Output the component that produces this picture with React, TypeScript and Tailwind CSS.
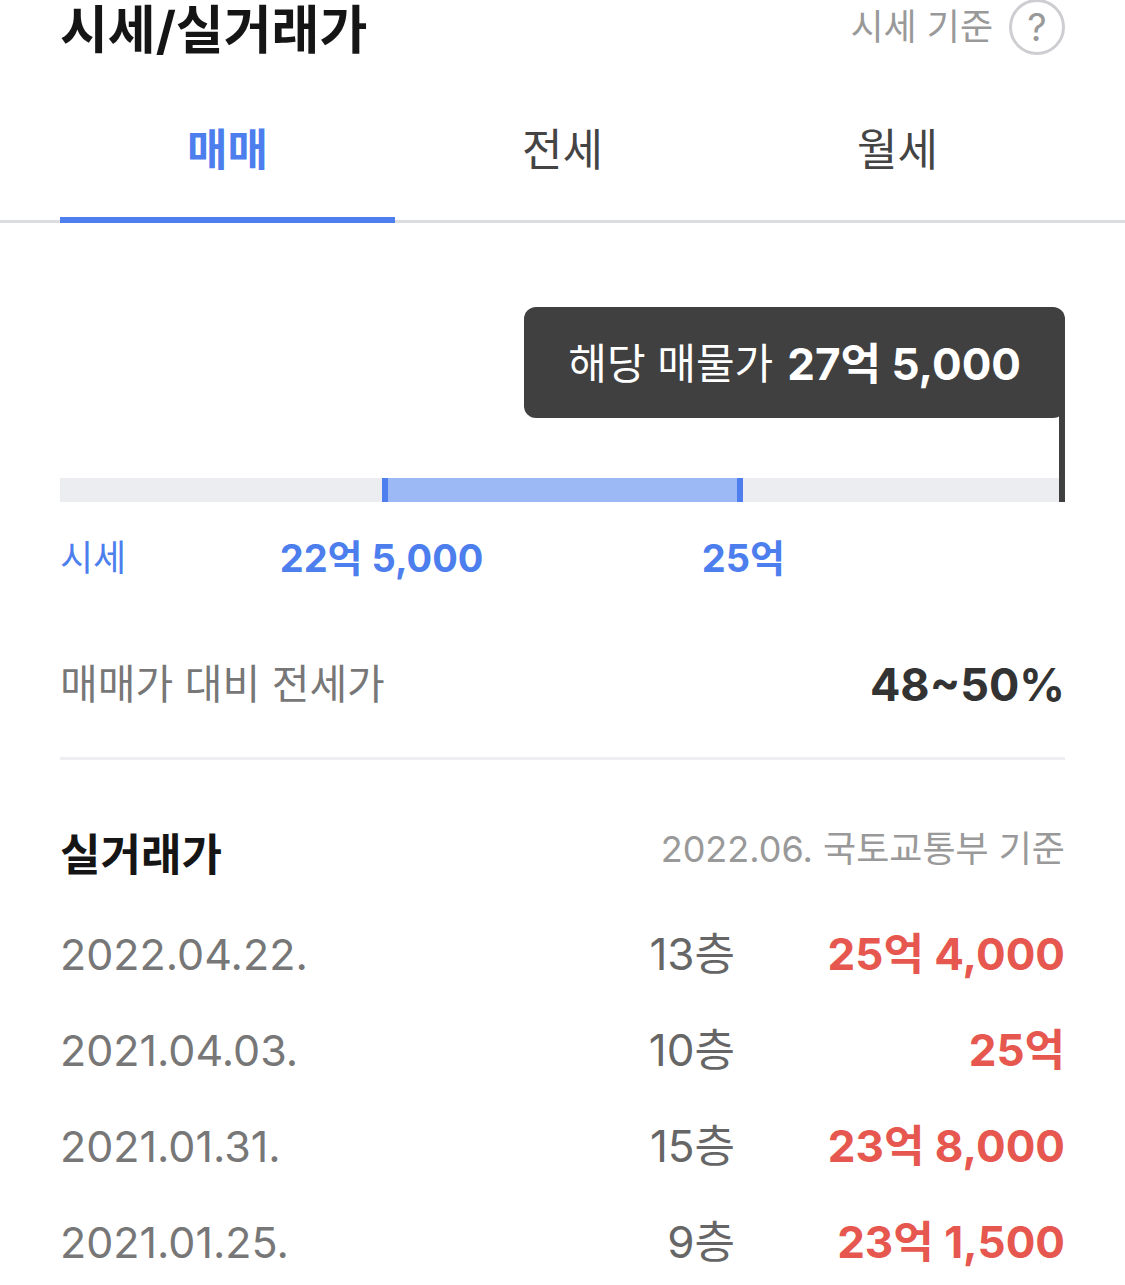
import React, { useState } from 'react';

const tabs = ['매매', '전세', '월세'];

const deals = [
  { date: '2022.04.22.', floor: '13층', price: '25억 4,000' },
  { date: '2021.04.03.', floor: '10층', price: '25억' },
  { date: '2021.01.31.', floor: '15층', price: '23억 8,000' },
  { date: '2021.01.25.', floor: '9층', price: '23억 1,500' },
];

const App = () => {
  const [activeTab, setActiveTab] = useState('매매');

  return (
    <main className="w-full overflow-hidden bg-white font-[Inter,'Noto_Sans_CJK_KR',sans-serif]">
      {/* Header */}
      <header className="flex h-[54px] items-center justify-between px-[60px]">
        <h1 className="pt-2 text-[52px] leading-14 font-bold text-[#151515]">시세/실거래가</h1>
        <div className="flex items-center gap-4 text-[36px] leading-14 text-[#999]">
          <span>시세 기준</span>
          <button
            aria-label="시세 기준 안내"
            className="flex size-14 items-center justify-center rounded-full border-3 border-[#cdcdd2] text-[38px]"
          >
            ?
          </button>
        </div>
      </header>

      {/* Tabs */}
      <nav className="mt-[38px] flex border-b-3 border-[#dcdde0] px-[60px]">
        {tabs.map((tab) => (
          <button
            key={tab}
            onClick={() => setActiveTab(tab)}
            className={`-mb-[3px] h-[131px] flex-1 border-b-6 pb-2.5 text-[44px] ${
              activeTab === tab
                ? 'border-[#4f7fee] font-bold text-[#4d7eee]'
                : 'border-transparent text-[#444]'
            }`}
          >
            {tab}
          </button>
        ))}
      </nav>

      {/* Price range */}
      <section className="px-[60px] pt-21">
        <div className="relative flex justify-end pb-15">
          <p className="flex h-[111px] items-center gap-3.5 rounded-xl bg-[#404040] px-11 pt-0.5 text-white">
            <span className="text-[42px]">해당 매물가</span>
            <strong className="text-[44px]">27억 5,000</strong>
          </p>
          <span className="absolute top-12 right-0 -bottom-6 z-10 w-1.5 bg-[#404040]" />
        </div>
        <div className="flex h-6 bg-[#ecedf1]">
          <div className="ml-[32%] w-[36%] border-x-6 border-[#4f7fee] bg-[#9cb8f5]" />
        </div>
        <div className="relative mt-6 h-16 text-[36px] leading-16 text-[#4d7eee]">
          <span>시세</span>
          <strong className="absolute left-[32%] -translate-x-1/2 text-[38px] whitespace-nowrap">22억 5,000</strong>
          <strong className="absolute left-[68%] -translate-x-1/2 text-[38px] whitespace-nowrap">25억</strong>
        </div>
      </section>

      {/* Lease ratio */}
      <section className="mx-[60px] flex h-[170px] items-center justify-between border-b-3 border-[#ededf2] pt-[22px]">
        <span className="text-[41px] text-[#777]">매매가 대비 전세가</span>
        <strong className="text-[45px] text-[#333]">48~50%</strong>
      </section>

      {/* Deals */}
      <section className="px-[60px] pt-16">
        <div className="flex h-[62px] items-center justify-between">
          <h2 className="text-[44px] font-bold text-[#151515]">실거래가</h2>
          <span className="pb-3 text-[36px] text-[#999]">2022.06. 국토교통부 기준</span>
        </div>
        <table className="mt-5 w-full text-[44px]">
          <tbody>
            {deals.map((deal) => (
              <tr key={deal.date} className="h-24">
                <td className="text-[43px] text-[#777]">{deal.date}</td>
                <td className="text-right text-[#666]">{deal.floor}</td>
                <td className="w-[330px] text-right font-bold text-[#e6574f]">{deal.price}</td>
              </tr>
            ))}
          </tbody>
        </table>
      </section>
    </main>
  );
};

export default App;
